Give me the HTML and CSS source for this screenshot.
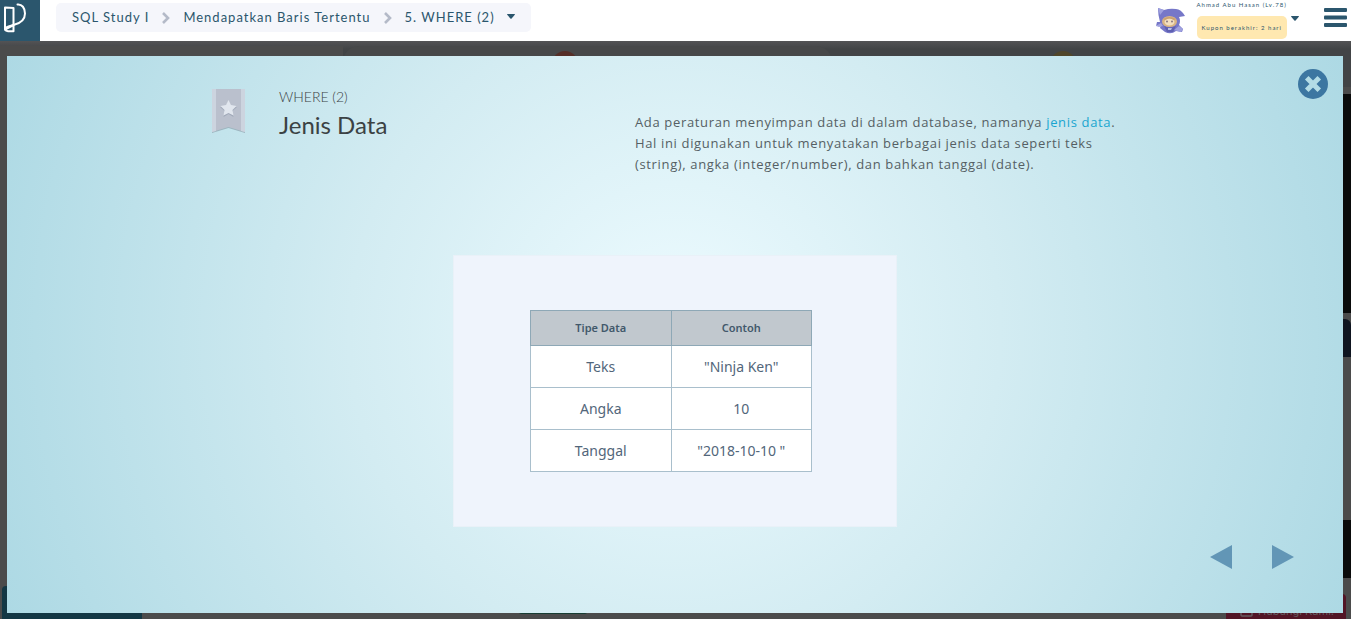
FILE: index.html
```html
<!DOCTYPE html>
<html lang="id">
<head>
<meta charset="utf-8">
<title>SQL Study I - Jenis Data</title>
<meta name="viewport" content="width=device-width, initial-scale=1">
<link rel="stylesheet" href="styles.css">
</head>
<body>
<header class="topbar">
  <a class="brand" href="#" aria-label="Beranda">
    <svg width="40" height="41" viewBox="0 0 40 41" fill="none" stroke="#fff" stroke-width="2" stroke-linejoin="round" stroke-linecap="round"><path d="M13.500 25V8L5 7.500V29.500L13.500 25"/><path d="M17.500 4.500C22 4 25 8 25 13.500C25 20 20 23.500 13.500 25L8.500 26.500C4 28 4.500 31 8 31.200H13.500V25"/></svg>
  </a>
  <nav class="crumbs" aria-label="Breadcrumb">
    <a class="crumb" href="#">SQL Study I</a>
    <svg class="chevron" width="8" height="12" viewBox="0 0 8 12" fill="none" stroke="#b4bac8" stroke-width="2.600"><path d="M1 1L6 6L1 11"/></svg>
    <a class="crumb" href="#">Mendapatkan Baris Tertentu</a>
    <svg class="chevron" width="8" height="12" viewBox="0 0 8 12" fill="none" stroke="#b4bac8" stroke-width="2.600"><path d="M1 1L6 6L1 11"/></svg>
    <button class="crumb lesson" type="button">5. WHERE (2)<svg width="8" height="5" viewBox="0 0 8 5"><path fill="#2b566d" d="M0 .5Q0 0 .5 0H7.500Q8 0 8 .5L4.600 4.500Q4 5 3.400 4.500Z"/></svg></button>
  </nav>
  <div class="account">
    <svg class="avatar" width="30" height="27" viewBox="0 0 30 27">
      <path fill="#7677c8" d="M2 1L8 3Q14 1 20 2Q25 2 29 9L23 10Q25 14 23 18L27 22L26 25L20 24Q15 28 9 25L4 21L5 17L0 19L1 15L4 15Q2 8 2 1Z"/>
      <path fill="#9fa1df" d="M2 1L8 3L4 8ZM0 19L5 16L7 19L3 20ZM18 23L23 19L27 22L25 25Z"/>
      <ellipse cx="13.500" cy="14.500" rx="7.500" ry="5.500" fill="#d9b583"/>
      <ellipse cx="13.500" cy="15" rx="5" ry="3.500" fill="#f3dfbf"/>
      <path fill="#c9a170" d="M7 12Q13 8 20 12L18 13Q13 10 9 13Z"/>
      <circle cx="11" cy="14.500" r="1" fill="#8a7880"/><circle cx="16" cy="14.500" r="1" fill="#8a7880"/>
      <path fill="#5f60b2" d="M8 19Q14 22 20 19L17 25H11Z"/><path fill="#b9bfe6" d="M12 21H16L15 23H12Z"/>
    </svg>
    <div class="account-text">
      <span class="account-name">Ahmad Abu Hasan (Lv.78)</span>
      <span class="coupon">Kupon berakhir: 2 hari</span>
    </div>
    <button class="icon-button" type="button" aria-label="Menu akun"><svg width="8" height="5" viewBox="0 0 8 5"><path fill="#2b566d" d="M0 .5Q0 0 .5 0H7.500Q8 0 8 .5L4.600 4.500Q4 5 3.400 4.500Z"/></svg></button>
    <button class="icon-button menu" type="button" aria-label="Menu"><svg width="23" height="19" viewBox="0 0 23 19" fill="#2b566d"><rect width="23" height="4" rx="1"/><rect y="7.500" width="23" height="4" rx="1"/><rect y="15" width="23" height="4" rx="1"/></svg></button>
  </div>
</header>
<main class="stage">
  <div class="workspace" aria-hidden="true">
    <div class="tabs">
      <div class="tab"></div>
      <div class="tab card"><span class="dot red"></span></div>
      <div class="tab"><span class="dot amber"></span></div>
    </div>
    <div class="side">
      <div class="console"></div>
      <div class="chip"></div>
      <div class="console small"></div>
    </div>
    <div class="bottom">
      <div class="block teal"></div>
      <div class="block green"></div>
      <div class="block help"><svg width="13" height="11" viewBox="0 0 13 11" fill="none" stroke="#675b5f" stroke-width="1.500"><rect x="1" y="1" width="11" height="9" rx="1"/><path d="M3 3L6.500 6L10 3"/></svg>Hubungi Kami.</div>
    </div>
  </div>
  <section class="modal" role="dialog" aria-labelledby="slide-title">
    <button class="close" type="button" aria-label="Tutup"><svg width="30" height="30" viewBox="0 0 30 30"><circle cx="15" cy="15" r="15" fill="#3c76a1"/><path d="M10.500 10.500L19.500 19.500M19.500 10.500L10.500 19.500" stroke="#b3dce6" stroke-width="5" stroke-linecap="square"/></svg></button>
    <div class="intro">
      <svg class="bookmark" width="34" height="45" viewBox="0 0 34 45"><path fill="#9cb5bf" d="M0 1H33V44L16.500 39L0 44Z"/><path fill="#bac0cd" d="M0 0H33V43L16.500 38L0 43Z"/><path fill="#ccd4df" d="M0 0H4V42L0 43ZM29 0H33V43L29 42Z"/><path fill="#a0a9b9" d="M16.500 12L19 17L25 18L20.500 22L21.500 28L16.500 25L11.500 28L12.500 22L8 18L14 17Z"/><path fill="#e1e6ee" d="M16.500 11L19 16L24.500 17L20.500 21L21.500 26.500L16.500 24L11.500 26.500L12.500 21L8.500 17L14 16Z"/></svg>
      <div class="titles">
        <p class="lesson-name">WHERE (2)</p>
        <h1 class="slide-title" id="slide-title">Jenis Data</h1>
      </div>
      <p class="description">Ada peraturan menyimpan data di dalam database, namanya <a href="#">jenis data</a>. Hal ini digunakan untuk menyatakan berbagai jenis data seperti teks (string), angka (integer/number), dan bahkan tanggal (date).</p>
    </div>
    <div class="figure">
      <table class="types">
        <thead><tr><th scope="col">Tipe Data</th><th scope="col">Contoh</th></tr></thead>
        <tbody>
          <tr><td>Teks</td><td>"Ninja Ken"</td></tr>
          <tr><td>Angka</td><td>10</td></tr>
          <tr><td>Tanggal</td><td>"2018-10-10 "</td></tr>
        </tbody>
      </table>
    </div>
    <div class="pager">
      <button class="icon-button" type="button" aria-label="Sebelumnya"><svg width="22" height="24" viewBox="0 0 22 24"><path fill="#6296b6" d="M0 12L22 0V24Z"/></svg></button>
      <button class="icon-button" type="button" aria-label="Berikutnya"><svg width="22" height="24" viewBox="0 0 22 24"><path fill="#6296b6" d="M22 12L0 0V24Z"/></svg></button>
    </div>
  </section>
</main>
</body>
</html>
```
FILE: styles.css
```css
* { box-sizing: border-box; }
body {
  margin: 0;
  min-height: 100vh;
  display: flex;
  flex-direction: column;
  font-family: Lato, sans-serif;
  color: #2b566d;
  background: #4b4b4b;
}
button { font: inherit; color: inherit; border: 0; padding: 0; background: none; cursor: pointer; }
svg { display: block; flex: none; }
a { color: inherit; text-decoration: none; }
p, h1 { margin: 0; }

.topbar { display: flex; align-items: flex-start; height: 41px; background: #fff; }
.brand { background: #2b566d; }
.crumbs {
  display: flex;
  align-items: center;
  height: 29px;
  margin: 3px 0 0 16px;
  padding: 0 16px;
  gap: 13px;
  background: #f5f6fb;
  border-radius: 5px;
}
.crumb { padding-bottom: 2px; font-size: 13px; line-height: 20px; letter-spacing: 1px; white-space: nowrap; }
.lesson { display: flex; align-items: center; gap: 12px; letter-spacing: 1px; }
.account { display: flex; margin-left: auto; padding-right: 4px; }
.avatar { margin: 7px 11px 0 0; }
.account-text {
  display: flex;
  flex-direction: column;
  align-items: stretch;
  font-size: 6px;
  line-height: 10px;
  letter-spacing: 1px;
  white-space: nowrap;
}
.coupon { margin-top: 6px; padding: 0 5px; line-height: 23px; background: #ffe8b0; border-radius: 5px; }
.account > .icon-button { align-self: flex-start; margin: 16px 0 0 4px; }
.account > .menu { margin: 8px 0 0 25px; }

.stage { position: relative; flex: 1; display: flex; }
.workspace {
  flex: 1;
  display: grid;
  grid-template-rows: 46px 1fr 41px;
  background: linear-gradient(#58585a, #4b4b4b 8px);
}
.tabs { display: grid; grid-template-columns: 343px 489px 1fr; padding-top: 5px; background: linear-gradient(#535355, #424446 8px); }
.tab { display: flex; justify-content: center; padding-top: 5px; }
.tab:first-child { background: #4b4b4b; }
.card { background: #474849; border-radius: 16px 16px 0 0; padding-right: 46px; }
.tab:last-child { justify-content: flex-start; padding-left: 218px; }
.dot { width: 26px; height: 26px; border-radius: 50%; }
.red { background: #552e27; }
.amber { background: #50462a; }
.side { display: flex; flex-direction: column; align-items: flex-end; padding-top: 7px; }
.console { width: 20px; flex: 219; background: #0a0b0b; }
.chip { width: 20px; flex: 38; margin: 6px 0 163px; background: #0f1520; border-radius: 0 6px 0 0; }
.small { flex: 58; }
.bottom { display: flex; padding: 8px 5px 0 2px; }
.block { align-self: stretch; }
.teal { width: 140px; background: #133744; border-radius: 4px 0 0 0; }
.green { width: 70px; height: 28px; margin: 0 auto 0 376px; align-self: flex-start; background: #173c32; border-radius: 4px; }
.help {
  display: flex;
  align-items: center;
  gap: 5px;
  width: 120px;
  margin-top: 8px;
  padding: 9px 14px 0;
  font: 11px/16px Inter, sans-serif;
  white-space: nowrap;
  color: #675b5f;
  background: #521526;
  border-radius: 4px 4px 0 0;
}

.modal {
  position: absolute;
  inset: 15px 8px 6px 7px;
  display: flex;
  flex-direction: column;
  padding: 33px 49px 44px;
  background: radial-gradient(circle farthest-corner at center, #edfbff, #d3ecf2 45%, #add9e4 100%);
}
.close { position: absolute; top: 13px; right: 15px; }
.intro {
  display: grid;
  grid-template-columns: 67px 356px 1fr;
  width: 100%;
  max-width: 926px;
  margin: 0 auto;
  color: #555f64;
}
.lesson-name { font-size: 14px; line-height: 15px; font-weight: 300; color: #3b4244; }
.slide-title { margin-top: 4px; font-size: 24px; line-height: 34px; font-weight: 400; color: #3b4244; }
.description { padding-top: 23px; font: 13px/21px "Open Sans", sans-serif; letter-spacing: 0.05em; }
.description a { color: #19a5d0; }
.figure {
  width: 444px;
  margin: 80px auto 0;
  padding: 54px 76px;
  background: #eff4fc;
  border: 1px solid #e9f1f8;
}
.types { width: 282px; border-collapse: collapse; table-layout: fixed; font: 14px/20px "Noto Sans", sans-serif; color: #52667a; background: #fff; }
.types th, .types td { padding: 0; border: 1px solid #a9bfcc; text-align: center; }
.types th { height: 35px; font-size: 11px; font-weight: 600; color: #42586b; background: #c1c8ce; border-color: #8ea8b6; }
.types td { height: 42px; }
.pager { display: flex; justify-content: flex-end; gap: 40px; margin-top: auto; }
```
